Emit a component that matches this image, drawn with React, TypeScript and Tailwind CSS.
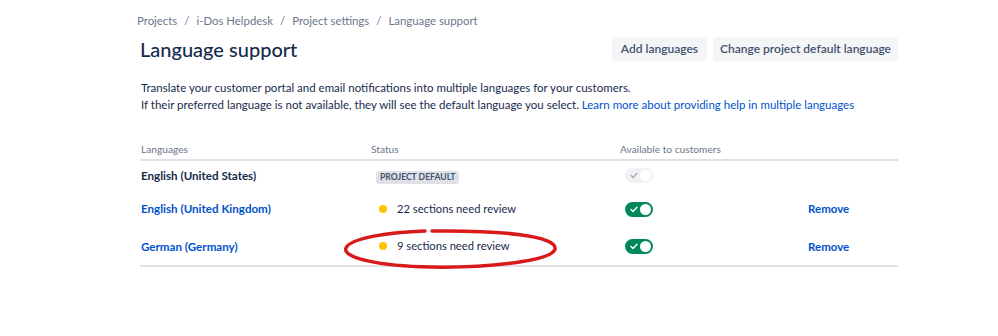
import React from "react";

function Toggle({ disabled }: { disabled?: boolean }) {
  return (
    <div
      className={
        "relative w-[28px] h-[15px] rounded-full " +
        (disabled ? "bg-[#f1f2f4]" : "bg-[#00875a]")
      }
    >
      <svg
        className="absolute left-[5px] top-[4px]"
        width="8"
        height="7"
        viewBox="0 0 8 7"
      >
        <path
          d="M1 3.6 L3 5.5 L7 1.3"
          fill="none"
          stroke={disabled ? "#a5adba" : "#ffffff"}
          strokeWidth="1.4"
          strokeLinecap="round"
          strokeLinejoin="round"
        />
      </svg>
      <div className="absolute right-[2px] top-[2px] w-[11px] h-[11px] rounded-full bg-white" />
    </div>
  );
}

function Dot() {
  return <span className="inline-block w-[8px] h-[8px] rounded-full bg-[#ffc400] mr-[10px]" />;
}

const cols = "grid grid-cols-[230px_250px_188px_1fr]";

export default function App() {
  return (
    <div
      className="w-[998px] h-[336px] bg-white relative text-[#172b4d]"
      style={{ fontFamily: 'Lato, "Open Sans", sans-serif' }}
    >
      <div className="pl-[137px] pr-[100px] pt-[12px]">
        <div className="text-[11.4px] text-[#6b778c] flex gap-[7px] h-[18px] items-center">
          <span>Projects</span>
          <span>/</span>
          <span>i-Dos Helpdesk</span>
          <span>/</span>
          <span>Project settings</span>
          <span>/</span>
          <span>Language support</span>
        </div>
        <div className="flex items-center justify-between mt-[7px] pl-[3px]">
          <h1 className="text-[20px] font-medium text-[#172b4d] leading-[24px]">Language support</h1>
          <div className="flex gap-[6px]">
            <button className="h-[24px] px-[9px] rounded-[3px] bg-[#f4f5f7] text-[#42526e] text-[12px] font-semibold">
              Add languages
            </button>
            <button className="h-[24px] px-[7px] rounded-[3px] bg-[#f4f5f7] text-[#42526e] text-[12px] font-semibold">
              Change project default language
            </button>
          </div>
        </div>
        <div className="mt-[18px] pl-[4px] text-[11.5px] leading-[17px] text-[#172b4d]">
          <p>Translate your customer portal and email notifications into multiple languages for your customers.</p>
          <p>
            If their preferred language is not available, they will see the default language you select.{" "}
            <span className="text-[#0052cc]">Learn more about providing help in multiple languages</span>
          </p>
        </div>
        <div className="mt-[27px] w-[758px] ml-[3px]">
          <div className={cols + " text-[10.2px] text-[#6b778c] h-[21px] items-center border-b-2 border-[#dfe1e6]"}>
            <div className="pl-[1px]">Languages</div>
            <div className="pl-[1px]">Status</div>
            <div>Available to customers</div>
            <div />
          </div>
          <div className={cols + " h-[29px] items-center text-[11.6px]"}>
            <div className="font-bold text-[#172b4d] pl-[1px]">English (United States)</div>
            <div className="pl-[6px]">
              <span className="inline-block bg-[#dfe1e6] text-[#42526e] text-[8.6px] font-bold px-[4px] leading-[13px] rounded-[3px]">
                PROJECT DEFAULT
              </span>
            </div>
            <div className="pl-[5px]">
              <Toggle disabled />
            </div>
            <div />
          </div>
          <div className={cols + " h-[38px] items-center text-[11.6px]"}>
            <div className="font-bold text-[#0052cc] pl-[1px]">English (United Kingdom)</div>
            <div className="pl-[9px] flex items-center text-[#172b4d] text-[11.2px]">
              <Dot />
              22 sections need review
            </div>
            <div className="pl-[5px]">
              <Toggle />
            </div>
            <div className="font-bold text-[#0052cc] text-[11.5px]">Remove</div>
          </div>
          <div className={cols + " h-[39px] items-center text-[11.6px] border-b-2 border-[#dfe1e6]"}>
            <div className="font-bold text-[#0052cc] pl-[1px]">German (Germany)</div>
            <div className="pl-[9px] flex items-center text-[#172b4d] text-[11.2px]">
              <Dot />
              9 sections need review
            </div>
            <div className="pl-[5px]">
              <Toggle />
            </div>
            <div className="font-bold text-[#0052cc] text-[11.5px]">Remove</div>
          </div>
        </div>
      </div>
      <svg
        className="absolute left-0 top-0 pointer-events-none"
        width="998"
        height="336"
        viewBox="0 0 998 336"
      >
        <path
          d="M432 231 C 500 230, 558 236, 555 249 C 552 262, 480 268, 430 267 C 380 266, 342 258, 346 248 C 350 238, 390 232, 425 231"
          fill="none"
          stroke="#d91a1a"
          strokeWidth="3.5"
          strokeLinecap="round"
        />
      </svg>
    </div>
  );
}
